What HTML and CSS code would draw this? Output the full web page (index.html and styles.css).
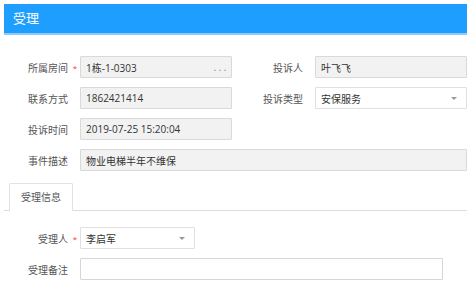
FILE: index.html
```html
<!DOCTYPE html>
<html lang="zh-CN">

<head>
    <meta charset="UTF-8">
    <meta name="viewport" content="width=device-width, initial-scale=1.0">
    <title>受理</title>
    <link rel="stylesheet" href="styles.css">
</head>

<body>
    <div class="panel">
        <div class="panel-title">受理</div>

        <div class="form">
            <div class="form-row">
                <div class="label">所属房间<span class="req">*</span></div>
                <div class="field disabled picker"><span>1栋-1-0303</span><span class="dots">...</span></div>
                <div class="label">投诉人<span class="req"></span></div>
                <div class="field disabled">叶飞飞</div>
            </div>
            <div class="form-row">
                <div class="label">联系方式<span class="req"></span></div>
                <div class="field disabled">1862421414</div>
                <div class="label">投诉类型<span class="req"></span></div>
                <div class="field select"><span>安保服务</span><i class="arrow"></i></div>
            </div>
            <div class="form-row">
                <div class="label">投诉时间<span class="req"></span></div>
                <div class="field disabled">2019-07-25 15:20:04</div>
            </div>
            <div class="form-row wide">
                <div class="label">事件描述<span class="req"></span></div>
                <div class="field disabled">物业电梯半年不维保</div>
            </div>
        </div>

        <div class="tab-bar">
            <div class="tab active">受理信息</div>
        </div>

        <div class="form sub">
            <div class="form-row">
                <div class="label">受理人<span class="req">*</span></div>
                <div class="field select handler"><span>李启军</span><i class="arrow"></i></div>
            </div>
            <div class="form-row">
                <div class="label">受理备注<span class="req"></span></div>
                <div class="field remark"></div>
            </div>
        </div>
    </div>
</body>

</html>
```

FILE: styles.css
```css
body {
    margin: 0;
    background-color: #fff;
    font-family: 'Open Sans', 'Noto Sans CJK SC', sans-serif;
    font-size: 10px;
    color: #333;
}

.panel {
    margin: 4px;
    width: 463px;
}

.panel-title {
    height: 29px;
    line-height: 29px;
    padding-left: 9px;
    background-color: #1e9fff;
    border-bottom: 2px solid #8fcbff;
    color: #fff;
    font-size: 13px;
}

.form {
    display: flex;
    flex-direction: column;
    gap: 9px;
    padding-top: 21px;
}

.form-row {
    display: grid;
    grid-template-columns: 76px 152px 83px 152px;
    height: 22px;
}

.form-row.wide {
    grid-template-columns: 76px 387px;
}

.label {
    display: flex;
    justify-content: flex-end;
    align-items: center;
    color: #555;
}

.req {
    width: 12px;
    text-align: center;
    color: #ff3030;
    font-size: 8px;
    padding-left: 2px;
    box-sizing: border-box;
}

.field {
    display: flex;
    align-items: center;
    justify-content: space-between;
    box-sizing: border-box;
    padding: 0 5px;
    border: 1px solid #e0e0e0;
    border-radius: 1px;
    background-color: #fff;
    white-space: nowrap;
}

.field.disabled {
    background-color: #f2f2f2;
    border-color: #d9d9d9;
}

.dots {
    color: #888;
    letter-spacing: 2.5px;
    margin-right: -3px;
}

.arrow {
    width: 0;
    height: 0;
    margin-right: 4px;
    border-left: 3px solid transparent;
    border-right: 3px solid transparent;
    border-top: 3px solid #999;
}

.tab-bar {
    display: flex;
    margin-top: 12px;
    padding-left: 5px;
    border-bottom: 1px solid #dcdcdc;
}

.tab {
    width: 64px;
    height: 28px;
    line-height: 27px;
    box-sizing: border-box;
    text-align: center;
    color: #555;
    border: 1px solid #e2e2e2;
    border-bottom: none;
    border-radius: 2px 2px 0 0;
    background-color: #fff;
    margin-bottom: -1px;
}

.form.sub {
    padding-top: 16px;
}

.form.sub .form-row {
    grid-template-columns: 76px auto;
    justify-content: start;
}

.handler {
    width: 115px;
}

.remark {
    width: 363px;
    border-color: #d6d6d6;
}
```
